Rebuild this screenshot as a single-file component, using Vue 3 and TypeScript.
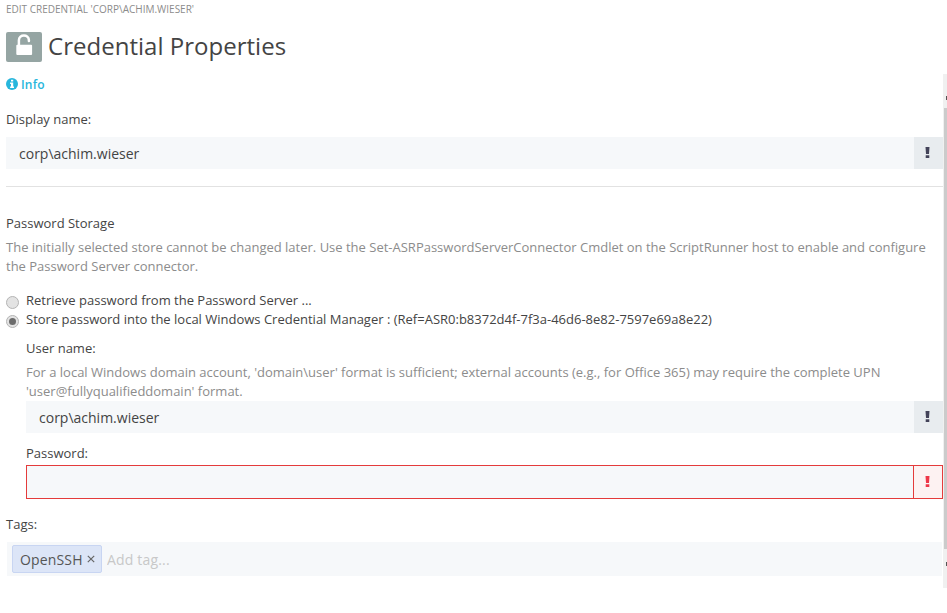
<script setup lang="ts">
import { ref } from 'vue'

interface StoreOption {
  id: string
  label: string
}

const displayName = ref('corp\\achim.wieser')
const userName = ref('corp\\achim.wieser')
const password = ref('')
const newTag = ref('')
const tags = ref<string[]>(['OpenSSH'])
const store = ref('local')
const stores: StoreOption[] = [
  { id: 'server', label: 'Retrieve password from the Password Server ...' },
  {
    id: 'local',
    label:
      'Store password into the local Windows Credential Manager : (Ref=ASR0:b8372d4f-7f3a-46d6-8e82-7597e69a8e22)',
  },
]

function removeTag(tag: string) {
  tags.value = tags.value.filter((t) => t !== tag)
}
</script>

<template>
  <div class="dialog">
    <header class="head">
      <div class="crumb">EDIT CREDENTIAL 'CORP\ACHIM.WIESER'</div>
      <div class="title-row">
        <span class="badge">
          <svg width="36" height="30" viewBox="0 0 36 30">
            <path d="M12.900 13.500V8.300C12.900 1.900 22.900 1.900 22.900 8.300V9" fill="none" stroke="#fff" stroke-width="2.500" stroke-linecap="round" />
            <rect x="10.300" y="12.800" width="15.800" height="10.200" rx="1" fill="#fff" />
          </svg>
        </span>
        <h1>Credential Properties</h1>
      </div>
    </header>

    <div class="scroller">
      <main class="form">
        <a class="info">
          <svg width="12" height="12" viewBox="0 0 12 12">
            <circle cx="6" cy="6" r="6" fill="#27b6dc" />
            <path d="M5 1.700h2.200v1.800H5zM4.100 4.600H7.200v4H8V10H4.100V8.600H5V6H4.100z" fill="#fff" />
          </svg>
          <span>Info</span>
        </a>

        <label class="label display-label">Display name:</label>
        <div class="field">
          <input v-model="displayName" type="text" />
          <span class="addon"><svg width="5" height="11" viewBox="0 0 5 11"><path d="M.5 0h4L4 7H1zM.7 8.200h3.600V11H.7z" /></svg></span>
        </div>

        <hr />

        <div class="label">Password Storage</div>
        <p class="help storage-help">
          The initially selected store cannot be changed later. Use the Set-ASRPasswordServerConnector Cmdlet on the ScriptRunner host to enable and configure<br />
          the Password Server connector.
        </p>

        <div class="radios">
          <label v-for="s in stores" :key="s.id" class="radio-row" @click="store = s.id">
            <span class="radio" :class="{ on: store === s.id }"></span>
            <span>{{ s.label }}</span>
          </label>
        </div>

        <section class="nested">
          <label class="label">User name:</label>
          <p class="help user-help">
            For a local Windows domain account, 'domain\user' format is sufficient; external accounts (e.g., for Office 365) may require the complete UPN<br />
            'user@fullyqualifieddomain' format.
          </p>
          <div class="field">
            <input v-model="userName" type="text" />
            <span class="addon"><svg width="5" height="11" viewBox="0 0 5 11"><path d="M.5 0h4L4 7H1zM.7 8.200h3.600V11H.7z" /></svg></span>
          </div>
          <label class="label password-label">Password:</label>
          <div class="field invalid">
            <input v-model="password" type="password" />
            <span class="addon"><svg width="5" height="11" viewBox="0 0 5 11"><path d="M.5 0h4L4 7H1zM.7 8.200h3.600V11H.7z" /></svg></span>
          </div>
        </section>

        <label class="label tags-label">Tags:</label>
        <div class="tags">
          <span v-for="t in tags" :key="t" class="tag">
            <span>{{ t }}</span>
            <svg width="8" height="8" viewBox="0 0 8 8" @click="removeTag(t)"><path d="M.8.8l6.400 6.400M7.200.8L.8 7.200" stroke="#666" stroke-width="1.200" /></svg>
          </span>
          <input v-model="newTag" type="text" placeholder="Add tag..." />
        </div>
      </main>

      <div class="scrollbar">
        <span class="arrow up"></span>
        <span class="thumb"></span>
        <span class="arrow down"></span>
      </div>
    </div>
  </div>
</template>

<style>
body {
  background: #fff;
  overflow: hidden;
}
</style>

<style scoped>
.dialog {
  box-sizing: border-box;
  width: 947px;
  height: 613px;
  overflow: hidden;
  font: 13px/19px 'Open Sans', 'Liberation Sans', sans-serif;
  color: #444;
}
.head {
  height: 74px;
  padding-left: 6px;
  box-sizing: border-box;
}
.crumb {
  height: 19px;
  font-size: 10px;
  color: #8c8c8c;
}
.title-row {
  display: flex;
  align-items: center;
  gap: 6px;
  margin-top: 13px;
  height: 30px;
}
.badge {
  display: flex;
  width: 36px;
  height: 30px;
  border-radius: 2px;
  background: #95a5a3;
}
h1 {
  margin: -2px 0 0;
  font-size: 24px;
  line-height: 30px;
  font-weight: 400;
  letter-spacing: 0.02px;
}
.scroller {
  display: flex;
  height: 514px;
}
.form {
  box-sizing: border-box;
  width: 943px;
  padding-left: 6px;
}
.info {
  display: flex;
  align-items: center;
  gap: 3px;
  height: 20px;
  color: #27b6dc;
  font-size: 12px;
  font-weight: 600;
  letter-spacing: 0.2px;
}
.label {
  display: block;
  height: 19px;
}
.display-label {
  margin: 16px 0 8px;
}
.field {
  display: flex;
  box-sizing: border-box;
  height: 32px;
  background: #f6f8fa;
}
input {
  flex: 1;
  min-width: 0;
  padding: 0 13px;
  border: 0;
  outline: 0;
  background: transparent;
  color: #444;
  font: 14px 'Open Sans', 'Liberation Sans', sans-serif;
}
.addon {
  display: flex;
  align-items: center;
  justify-content: center;
  box-sizing: border-box;
  width: 29px;
  padding: 0 2px 1px 0;
  background: #e8ecef;
  fill: #434359;
}
.invalid {
  height: 34px;
  border: 1px solid #e43b3b;
}
.invalid .addon {
  padding: 0 1px 1px 0;
  border-left: 1px solid #e43b3b;
  background: #fdf2f2;
  fill: #ee3648;
}
hr {
  height: 1px;
  margin: 17px 0 27px;
  border: 0;
  background: #e2e2e2;
}
.help {
  margin: 0;
  color: #8c8c8c;
  white-space: nowrap;
}
.storage-help {
  padding-top: 5px;
}
.radios {
  margin-top: 15px;
}
.radio-row {
  display: flex;
  height: 19px;
  gap: 7px;
  white-space: nowrap;
}
.radio {
  display: flex;
  align-items: center;
  justify-content: center;
  box-sizing: border-box;
  width: 13px;
  height: 13px;
  margin-top: 5px;
  border: 1px solid #b4b4b4;
  border-radius: 50%;
  background: #e3e3e3;
}
.radio.on::after {
  content: '';
  width: 7px;
  height: 7px;
  border-radius: 50%;
  background: #6b6b6b;
}
.nested {
  padding: 10px 0 0 20px;
}
.user-help {
  padding: 5px 0 0;
}
.password-label {
  margin: 11px 0 2px;
}
.tags-label {
  margin: 16px 0 8px;
}
.tags {
  display: flex;
  align-items: center;
  box-sizing: border-box;
  height: 34px;
  margin: 0 1px;
  padding-left: 5px;
  background: #f6f8fa;
}
.tag {
  display: flex;
  align-items: center;
  gap: 4px;
  box-sizing: border-box;
  width: 90px;
  height: 28px;
  padding-left: 7px;
  border: 1px solid #c8d5f2;
  border-radius: 2px;
  background: #dce5f7;
  color: #555;
  font-size: 14px;
  letter-spacing: 0.15px;
}
.tags input {
  padding: 0 5px;
  letter-spacing: 0.18px;
}
.tags input::placeholder {
  color: #c8c8c8;
  opacity: 1;
}
.scrollbar {
  display: flex;
  flex-direction: column;
  align-items: flex-end;
  width: 4px;
  background: #f0f0f0;
}
.arrow {
  width: 1px;
  height: 4px;
  background: #555;
}
.up {
  margin: 22px 0 8px;
}
.thumb {
  width: 3px;
  height: 441px;
  background: #cbcbcb;
}
.down {
  margin-top: 13px;
}
</style>
